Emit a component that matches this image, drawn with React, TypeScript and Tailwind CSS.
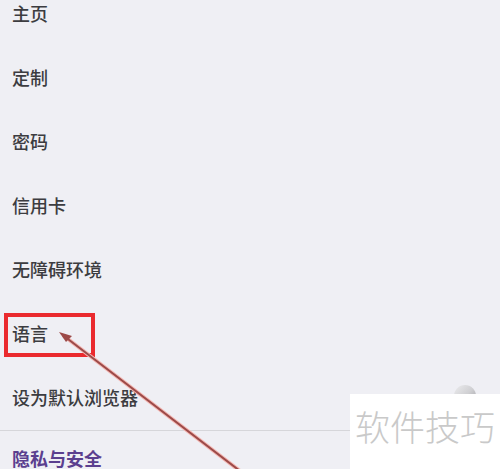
import React from "react";

const items = ["主页", "定制", "密码", "信用卡", "无障碍环境", "语言", "设为默认浏览器"];

export default function App() {
  return (
    <div
      className="relative w-[500px] h-[469px] overflow-hidden bg-[#efeff4]"
      style={{ fontFamily: '"Noto Sans CJK SC", "Noto Sans", sans-serif' }}
    >
      <div className="-mt-[19px] flex flex-col">
        {items.map((t) => (
          <div key={t} className="h-[64px] flex items-center pl-[12px] text-[18px] font-medium text-[#3c3c40] leading-none">
            {t}
          </div>
        ))}
        <div className="h-[1px] bg-[#d6d6da] mt-[1px]" />
        <div className="h-[53px] flex items-center pl-[12px] text-[18px] font-bold text-[#5b3f8f] leading-none">
          隐私与安全
        </div>
      </div>

      {/* red highlight box */}
      <div className="absolute left-[4px] top-[313px] w-[91px] h-[44px] border-[4px] border-[#ea2a2e]" />

      {/* arrow */}
      <svg className="absolute left-0 top-0" width="500" height="469" viewBox="0 0 500 469">
        <line x1="64" y1="336" x2="240" y2="471" stroke="#f4b7b3" strokeWidth="4" strokeLinecap="round" />
        <line x1="64" y1="336" x2="240" y2="471" stroke="#9c4a48" strokeWidth="2" strokeLinecap="round" />
        <polygon points="59,332 72,336 66,342" fill="#9c4a48" />
      </svg>

      {/* small gray blob */}
      <div className="absolute left-[454px] top-[385px] w-[22px] h-[22px] rounded-full bg-gradient-to-br from-[#ececee] via-[#d0d0d3] to-[#9c9ca0]" />

      {/* watermark */}
      <div className="absolute left-[350px] top-[394px] w-[150px] h-[75px] bg-white flex items-start pt-[14px] pl-[5px]">
        <span className="text-[35px] leading-none text-[#c9c9c9]" style={{ fontFamily: '"Noto Sans CJK SC", sans-serif', fontWeight: 300 }}>
          软件技巧
        </span>
      </div>
    </div>
  );
}
